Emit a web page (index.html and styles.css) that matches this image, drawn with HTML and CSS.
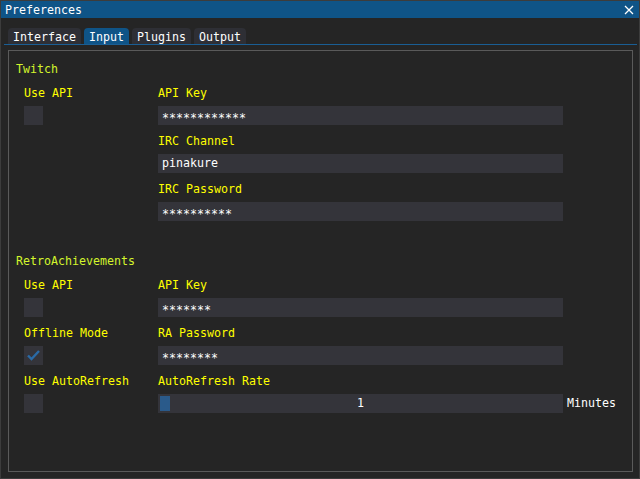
FILE: index.html
```html
<!DOCTYPE html>
<html>
<head>
<meta charset="utf-8">
<link rel="stylesheet" href="styles.css">
</head>
<body>
<div class="window">
  <div class="titlebar">
    <span class="title">Preferences</span>
    <svg class="close" width="10" height="10" viewBox="0 0 10 10"><path d="M1 1 L9 9 M9 1 L1 9" stroke="#ffffff" stroke-width="1.3" fill="none"/></svg>
  </div>
  <div class="tabs">
    <div class="tab w-interface">Interface</div>
    <div class="tab active w-input">Input</div>
    <div class="tab w-plugins">Plugins</div>
    <div class="tab w-output">Output</div>
  </div>
  <div class="tabline"></div>
  <div class="child">
    <div class="section">
      <div class="header">Twitch</div>
      <div class="row">
        <div class="field left">
          <div class="label">Use API</div>
          <div class="checkbox"></div>
        </div>
        <div class="field right">
          <div class="label">API Key</div>
          <div class="input"><span class="mask">************</span></div>
        </div>
      </div>
      <div class="row">
        <div class="field left"></div>
        <div class="field right">
          <div class="label">IRC Channel</div>
          <div class="input">pinakure</div>
        </div>
      </div>
      <div class="row">
        <div class="field left"></div>
        <div class="field right">
          <div class="label">IRC Password</div>
          <div class="input"><span class="mask">**********</span></div>
        </div>
      </div>
    </div>
    <div class="section second">
      <div class="header">RetroAchievements</div>
      <div class="row">
        <div class="field left">
          <div class="label">Use API</div>
          <div class="checkbox"></div>
        </div>
        <div class="field right">
          <div class="label">API Key</div>
          <div class="input"><span class="mask">*******</span></div>
        </div>
      </div>
      <div class="row">
        <div class="field left">
          <div class="label">Offline Mode</div>
          <div class="checkbox"><svg width="19" height="19" viewBox="0 0 19 19"><path d="M4 9.5 L7.5 13 L15 5" stroke="#2a6aa6" stroke-width="2.4" fill="none"/></svg></div>
        </div>
        <div class="field right">
          <div class="label">RA Password</div>
          <div class="input"><span class="mask">********</span></div>
        </div>
      </div>
      <div class="row">
        <div class="field left">
          <div class="label">Use AutoRefresh</div>
          <div class="checkbox"></div>
        </div>
        <div class="field right">
          <div class="label">AutoRefresh Rate</div>
          <div class="sliderrow">
            <div class="slider"><div class="grab"></div><span class="sval">1</span></div>
            <span class="unit">Minutes</span>
          </div>
        </div>
      </div>
    </div>
  </div>
</div>
</body>
</html>
```
FILE: styles.css
```css
html, body {
  margin: 0;
  padding: 0;
  background: #252525;
}
body {
  width: 640px;
  height: 479px;
  overflow: hidden;
  font-family: "DejaVu Sans Mono", "Liberation Mono", monospace;
  font-size: 11.63px;
  color: #ffffff;
}
.window {
  box-sizing: border-box;
  width: 640px;
  height: 479px;
  border: 1px solid #3c3c3c;
  background: #252525;
  display: flex;
  flex-direction: column;
}
.titlebar {
  height: 17px;
  background: #0f5487;
  display: flex;
  align-items: center;
  justify-content: space-between;
  padding-left: 4px;
  padding-right: 5px;
  flex-shrink: 0;
}
.title {
  line-height: 17px;
  padding-top: 2px;
}
.close {
  display: block;
}
.tabs {
  display: flex;
  gap: 3px;
  margin-top: 10px;
  padding-left: 7px;
  height: 16px;
  flex-shrink: 0;
}
.tab {
  box-sizing: border-box;
  height: 16px;
  line-height: 16px;
  padding-left: 5px;
  padding-top: 1px;
  background: #2e2f35;
  border-radius: 4px 4px 0 0;
}
.tab.active {
  background: #0f5487;
}
.w-interface { width: 73px; }
.w-input { width: 45px; }
.w-plugins { width: 59px; }
.w-output { width: 52px; }
.tabline {
  height: 1px;
  background: #1a5e94;
  margin: 0 2px 0 3px;
  flex-shrink: 0;
}
.child {
  box-sizing: border-box;
  flex: 1;
  margin: 5px 6px 6px 7px;
  border: 1px solid #5a5a5a;
  padding: 10px 0 0 7px;
}
.section.second {
  margin-top: 32px;
}
.header {
  height: 16px;
  line-height: 16px;
  color: #d4f52c;
  margin-bottom: 8px;
}
.row {
  display: flex;
  padding-left: 8px;
  margin-bottom: 8px;
}
.row:last-child {
  margin-bottom: 0;
}
.field.left {
  width: 134px;
  flex-shrink: 0;
}
.field.right {
  flex: 1;
}
.label {
  height: 16px;
  line-height: 16px;
  color: #ffff00;
  margin-bottom: 5px;
  white-space: nowrap;
}
.checkbox {
  width: 19px;
  height: 19px;
  background: #34343a;
}
.checkbox svg {
  display: block;
}
.input {
  box-sizing: border-box;
  width: 405px;
  height: 19px;
  line-height: 19px;
  padding-left: 4px;
  background: #34343a;
  white-space: pre;
  overflow: hidden;
}
.mask {
  vertical-align: -3px;
}
.sliderrow {
  display: flex;
  align-items: center;
  gap: 4px;
}
.slider {
  position: relative;
  box-sizing: border-box;
  width: 405px;
  height: 19px;
  background: #34343a;
  display: flex;
  align-items: center;
  justify-content: center;
}
.grab {
  position: absolute;
  left: 2px;
  top: 2px;
  width: 10px;
  height: 15px;
  background: #2a5a8a;
}
.sval {
  line-height: 19px;
}
.unit {
  line-height: 19px;
}
```
